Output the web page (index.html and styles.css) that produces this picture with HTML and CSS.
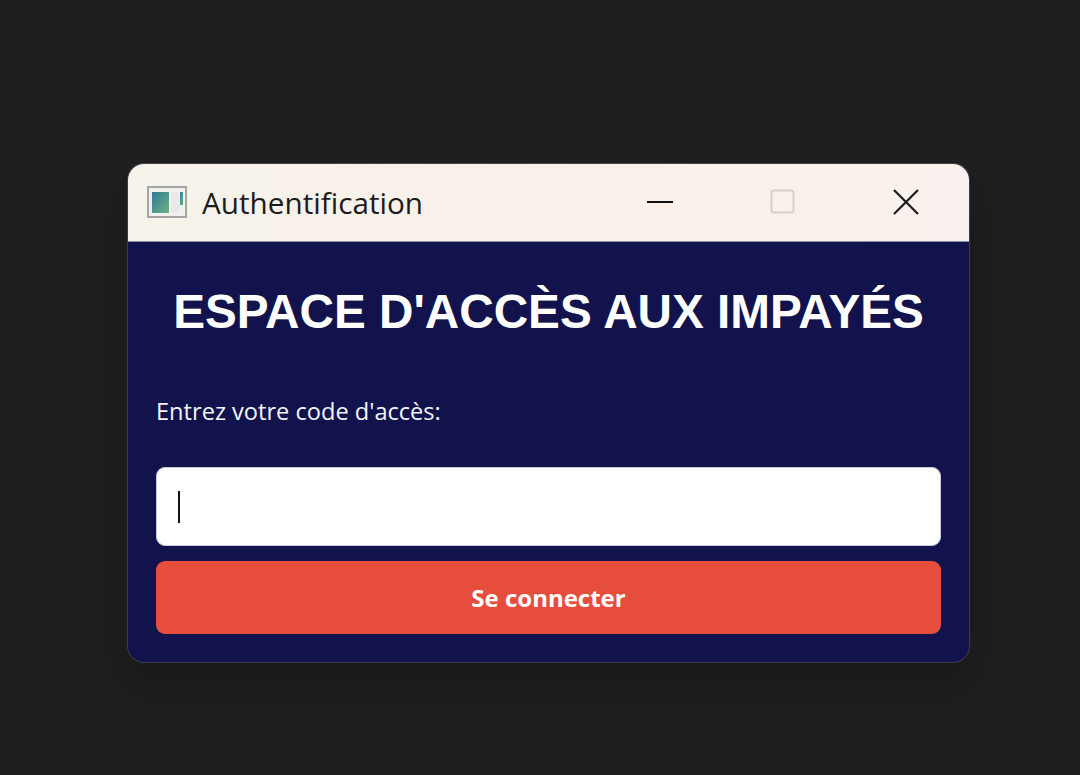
FILE: index.html
```html
<!DOCTYPE html>
<html lang="fr">
<head>
<meta charset="utf-8">
<title>Authentification</title>
<link rel="stylesheet" href="styles.css">
</head>
<body>
<div class="window">
  <header class="titlebar">
    <svg class="app-icon" width="40" height="32" viewBox="0 0 40 32">
      <rect x="1" y="1" width="38" height="30" fill="#f1f2f0" stroke="#a2a4a6" stroke-width="2"/>
      <defs><linearGradient id="g" x1="0" y1="0" x2="1" y2="1"><stop offset="0" stop-color="#2f7a9c"/><stop offset="1" stop-color="#6cb27c"/></linearGradient></defs>
      <rect x="5" y="6" width="17" height="21" fill="url(#g)"/>
      <rect x="24" y="6" width="8" height="21" fill="#e8eae8"/>
      <rect x="33" y="6" width="3" height="13" fill="url(#g)"/>
    </svg>
    <span class="title">Authentification</span>
    <div class="controls">
      <span class="ctl"><svg width="26" height="26" viewBox="0 0 26 26"><path d="M0 13H26" stroke="#111" stroke-width="2"/></svg></span>
      <span class="ctl"><svg width="26" height="26" viewBox="0 0 26 26"><rect x="1.5" y="1.5" width="22" height="22" rx="2.5" fill="none" stroke="#d3d0ce" stroke-width="2"/></svg></span>
      <span class="ctl"><svg width="26" height="26" viewBox="0 0 26 26"><path d="M1 1L25 25M25 1L1 25" stroke="#1a1a1a" stroke-width="2.2"/></svg></span>
    </div>
  </header>
  <main class="content">
    <h1 class="heading">ESPACE D'ACCÈS AUX IMPAYÉS</h1>
    <label class="label">Entrez votre code d'accès:</label>
    <div class="field"><span class="caret"></span></div>
    <button class="submit">Se connecter</button>
  </main>
</div>
</body>
</html>
```
FILE: styles.css
```css
* { box-sizing: border-box; }
html, body { margin: 0; height: 100%; }
body {
  background: #1f1f1f;
  padding: 163px 0 0 127px;
  overflow: hidden;
  font-family: "Open Sans", "Noto Sans", sans-serif;
}
.window {
  width: 843px;
  height: 500px;
  border: 1px solid #3c3c48;
  border-top-color: #44444a;
  border-radius: 17px;
  overflow: hidden;
  background: #12134d;
  box-shadow: 0 20px 50px rgba(0, 0, 0, 0.22);
  display: flex;
  flex-direction: column;
}
.titlebar {
  height: 78px;
  flex: none;
  background: linear-gradient(90deg, #f6f3ea 0%, #f9f0e9 45%, #f9f1ed 100%);
  border-bottom: 1px solid #8f8fa8;
  display: flex;
  align-items: center;
  padding: 0 2px 0 19px;
}
.app-icon { flex: none; margin-top: -2px; filter: blur(0.7px); }
.title {
  margin-left: 15px;
  font-size: 29.7px;
  color: #1c1c1c;
  font-family: "Open Sans", sans-serif;
}
.controls { margin-left: auto; display: flex; align-items: center; }
.ctl {
  width: 123px;
  display: flex;
  justify-content: center;
  align-items: center;
  margin-top: -2px;
}
.content {
  flex: 1;
  display: flex;
  flex-direction: column;
  padding: 0 28px 28px;
}
.heading {
  margin: 42px 0 0;
  text-align: center;
  font-family: "Liberation Sans", Arial, sans-serif;
  font-weight: 700;
  font-size: 47.7px;
  line-height: 56px;
  color: #fff;
}
.label {
  margin-top: 56px;
  font-size: 23.6px;
  line-height: 30px;
  color: #f4f4f8;
}
.field {
  margin-top: 41px;
  height: 79px;
  background: #fff;
  border: 1px solid #c9c9d6;
  border-radius: 9px;
  display: flex;
  align-items: center;
  padding-left: 21px;
}
.caret { width: 2px; height: 32px; background: #111; }
.submit {
  margin-top: 15px;
  height: 73px;
  border: 0;
  border-radius: 9px;
  background: #e74d3d;
  color: #fff;
  font-family: "Open Sans", sans-serif;
  font-weight: 700;
  font-size: 24px;
  padding: 0;
}
```
